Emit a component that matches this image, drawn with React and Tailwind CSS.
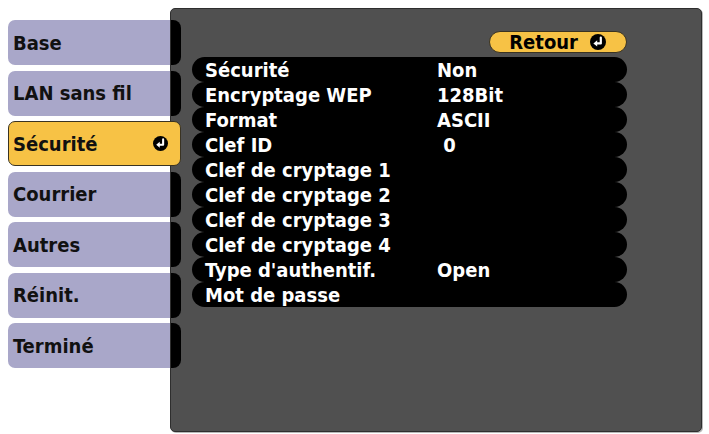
import React from "react";

const font = { fontFamily: '"DejaVu Sans Condensed", "DejaVu Sans", Verdana, sans-serif' };

function EnterIcon({ size = 16 }) {
  return (
    <svg width={size} height={size} viewBox="0 0 16 16">
      <circle cx="8" cy="8" r="8" fill="#000" />
      <path d="M10.8 3.6 V9.4 H6.2" stroke="#fff" strokeWidth="2.2" fill="none" strokeLinecap="round" strokeLinejoin="round" />
      <polygon points="3.4,9.4 7.2,6.2 7.2,12.6" fill="#fff" />
    </svg>
  );
}

const tabs = ["Base", "LAN sans fil", "Sécurité", "Courrier", "Autres", "Réinit.", "Terminé"];
const selected = 2;

const rows = [
  ["Sécurité", "Non"],
  ["Encryptage WEP", "128Bit"],
  ["Format", "ASCII"],
  ["Clef ID", "\u00a00"],
  ["Clef de cryptage 1", ""],
  ["Clef de cryptage 2", ""],
  ["Clef de cryptage 3", ""],
  ["Clef de cryptage 4", ""],
  ["Type d'authentif.", "Open"],
  ["Mot de passe", ""],
];

export default function App() {
  return (
    <div className="w-[709px] h-[434px] bg-white flex pl-[8px] overflow-hidden" style={font}>
      <div className="w-[162px] pt-[20px] flex flex-col gap-[5.5px] shrink-0">
        {tabs.map((t, i) =>
          i === selected ? (
            <div
              key={t}
              className="relative z-10 w-[173px] h-[45px] rounded-[7px] bg-[#f7c245] border border-[#3a3322] flex items-center justify-between pl-[4px] pr-[12px] text-[20px] font-bold text-[#111]"
            >
              <span>{t}</span>
              <EnterIcon size={15} />
            </div>
          ) : (
            <div
              key={t}
              className="w-[162px] h-[45px] rounded-l-[7px] bg-[#a9a7c9] flex items-center pl-[5px] text-[20px] font-bold text-[#111]"
            >
              {t}
            </div>
          )
        )}
      </div>
      <div className="mt-[8px] w-[532px] h-[424px] bg-[#505050] border border-[#2e2e2e] rounded-[5px] shadow-[1px_1px_0_#b8b8b8] flex shrink-0">
        <div className="w-[10px] pt-[11px] flex flex-col gap-[5.5px] shrink-0">
          {tabs.map((t, i) => (
            <div
              key={t}
              className={i === selected ? "h-[45px]" : "h-[45px] rounded-r-[8px] bg-black"}
            />
          ))}
        </div>
        <div className="flex flex-col pl-[11px] pt-[22px]">
          <div className="flex justify-end w-[435px]">
            <div className="h-[22px] w-[138px] rounded-full bg-[#f7c245] border border-[#3a3322] flex items-center justify-end gap-[12px] pr-[20px] text-[20px] font-bold text-black leading-none">
              <span>Retour</span>
              <EnterIcon size={16} />
            </div>
          </div>
          <div className="mt-[4px] flex flex-col w-[435px]">
            {rows.map(([l, v]) => (
              <div key={l} className="h-[25px] rounded-full bg-black flex items-center pl-[13px] text-[20px] font-bold text-white leading-none">
                <span className="w-[232px] shrink-0 whitespace-pre">{l}</span>
                <span className="whitespace-pre">{v}</span>
              </div>
            ))}
          </div>
        </div>
      </div>
    </div>
  );
}
